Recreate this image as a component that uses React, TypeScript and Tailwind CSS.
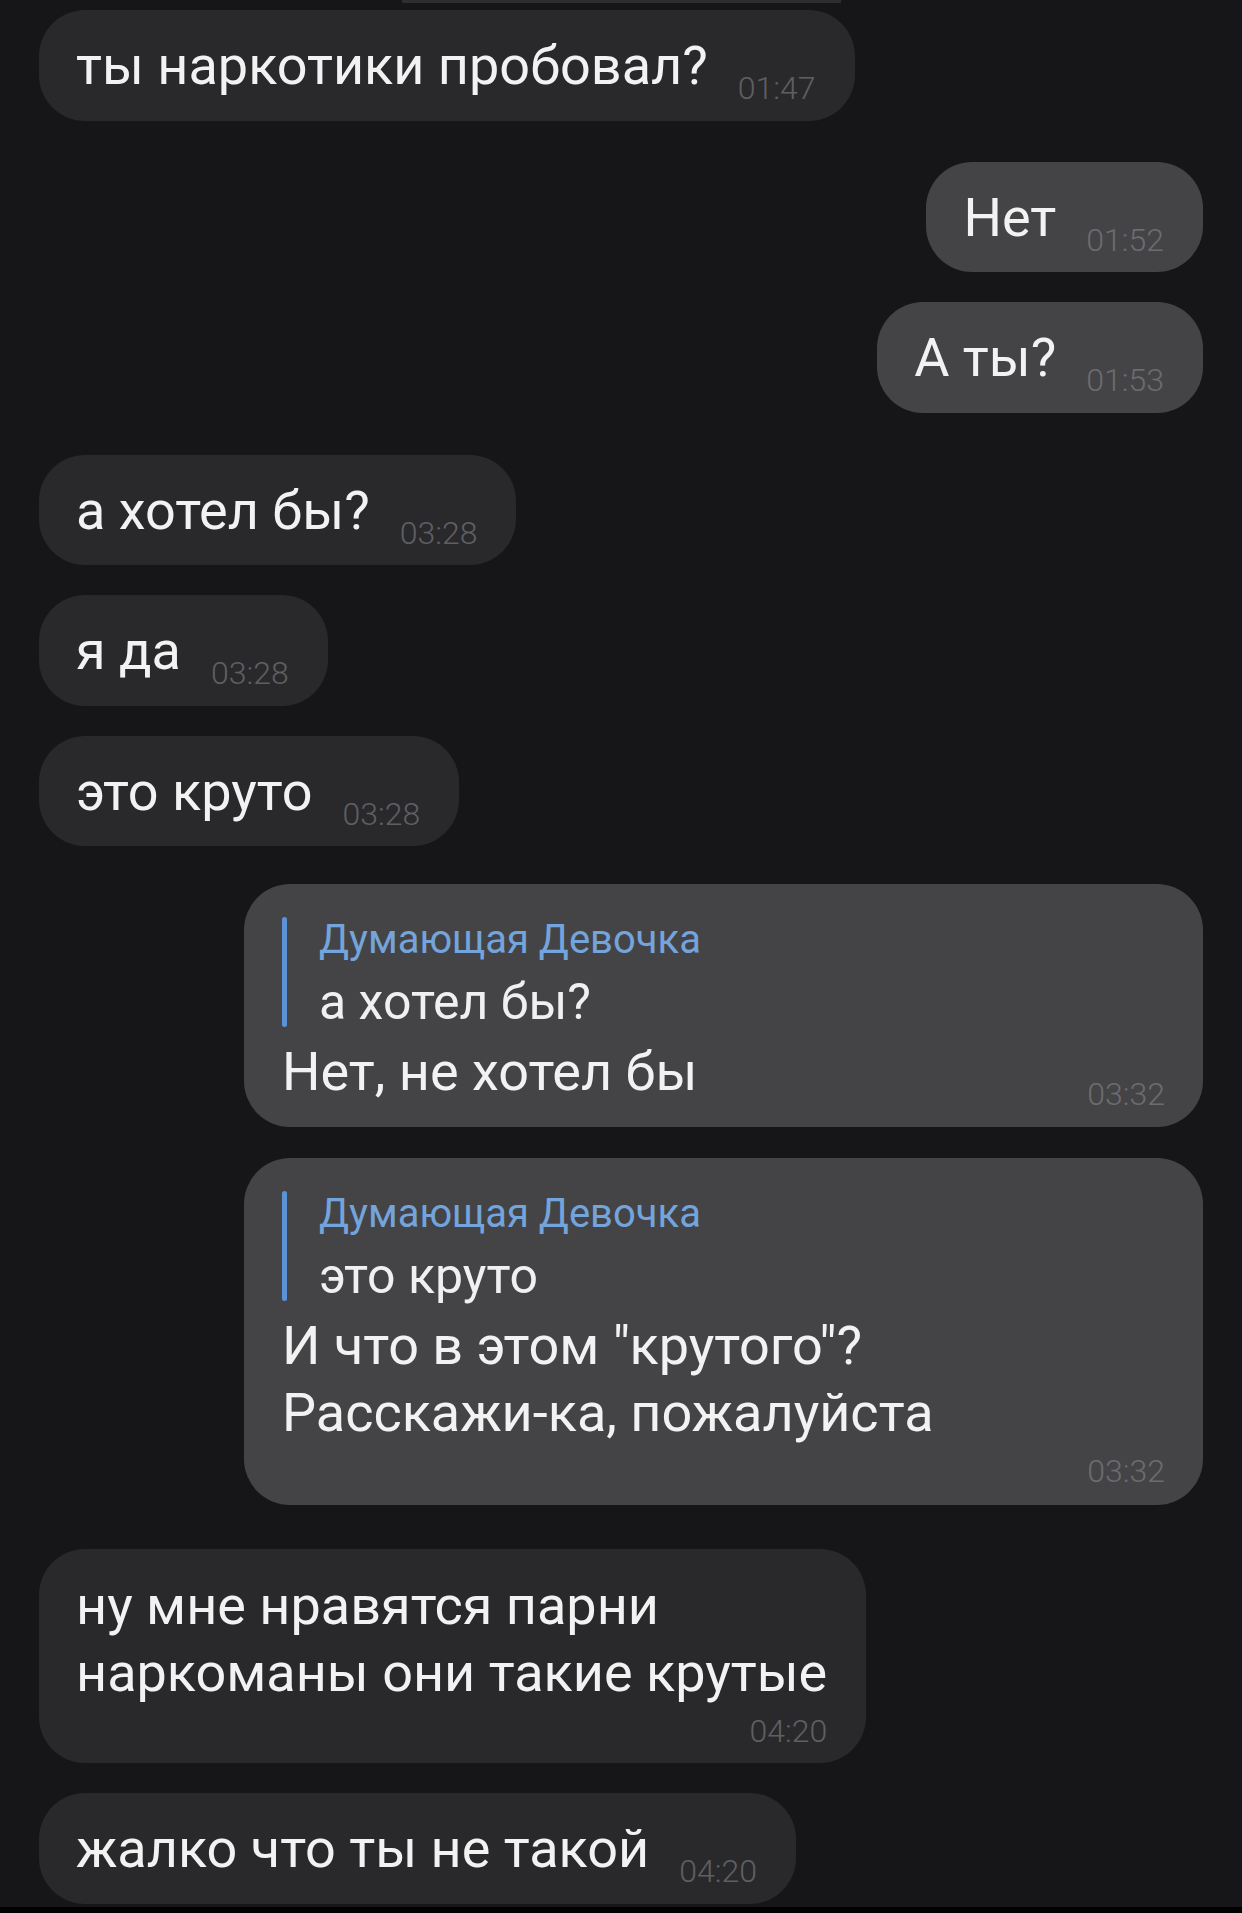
import type { ReactNode } from "react";

type Side = "in" | "out";

const font = { fontFamily: "Roboto, 'Noto Sans', sans-serif" };

function Time({ value, side }: { value: string; side: Side }) {
  return (
    <span
      className={
        "shrink-0 text-[32px] font-light leading-[40px] " +
        (side === "in" ? "text-[#5f5f62]" : "text-[#6c6c6f]")
      }
    >
      {value}
    </span>
  );
}

function Bubble({ side, text, time }: { side: Side; text: string; time: string }) {
  return (
    <div className={"flex " + (side === "in" ? "justify-start" : "justify-end")}>
      <div
        className={
          "flex items-end gap-[30px] rounded-[46px] pb-[21.5px] pl-[37px] pr-[39px] pt-[22px] " +
          (side === "in" ? "bg-[#29292c]" : "bg-[#444447]")
        }
      >
        <span className="text-[54px] leading-[67px] text-[#f2f2f2]">{text}</span>
        <span className="-mb-[9px]">
          <Time value={time} side={side} />
        </span>
      </div>
    </div>
  );
}

function MultiBubble({ lines, time }: { lines: string[]; time: string }) {
  return (
    <div className="flex justify-start">
      <div className="flex flex-col rounded-[46px] bg-[#29292c] pb-[12px] pl-[37px] pr-[39px] pt-[23px]">
        {lines.map((l) => (
          <span key={l} className="text-[54px] leading-[67px] text-[#f2f2f2]">
            {l}
          </span>
        ))}
        <div className="mt-[5px] flex justify-end">
          <Time value={time} side="in" />
        </div>
      </div>
    </div>
  );
}

function Reply({ quote, children }: { quote: string; children: ReactNode }) {
  return (
    <div className="flex justify-end">
      <div className="w-[959px] rounded-[46px] bg-[#444447] pb-[22px] pl-[38px] pr-[38px] pt-[26px]">
        <div className="flex">
          <div className="my-[7px] w-[5px] shrink-0 rounded-full bg-[#5b93d6]" />
          <div className="ml-[32px] flex flex-col">
            <span className="text-[40px] leading-[60px] text-[#74a4dc]">Думающая Девочка</span>
            <span className="text-[50px] leading-[64px] text-[#f0f0f0]">{quote}</span>
          </div>
        </div>
        <div className="mt-[4px]">{children}</div>
      </div>
    </div>
  );
}

export default function App() {
  return (
    <div className="flex min-h-[1913px] w-[1242px] flex-col bg-[#161618]" style={font}>
      <div className="ml-[402px] h-[3px] w-[439px] bg-[#2e2e31]" />
      <div className="flex flex-1 flex-col px-[39px] pt-[7px]">
        <Bubble side="in" text="ты наркотики пробовал?" time="01:47" />
        <div className="mt-[41px] flex flex-col gap-[30px]">
          <Bubble side="out" text="Нет" time="01:52" />
          <Bubble side="out" text="А ты?" time="01:53" />
        </div>
        <div className="mt-[42px] flex flex-col gap-[30px]">
          <Bubble side="in" text="а хотел бы?" time="03:28" />
          <Bubble side="in" text="я да" time="03:28" />
          <Bubble side="in" text="это круто" time="03:28" />
        </div>
        <div className="mt-[38px] flex flex-col gap-[31px]">
          <Reply quote="а хотел бы?">
            <div className="flex items-end justify-between">
              <span className="text-[54px] leading-[67px] text-[#f2f2f2]">Нет, не хотел бы</span>
              <span className="-mb-[9px]">
                <Time value="03:32" side="out" />
              </span>
            </div>
          </Reply>
          <Reply quote="это круто">
            <div className="flex flex-col">
              <span className="text-[54px] leading-[67px] text-[#f2f2f2]">И что в этом "крутого"?</span>
              <span className="text-[54px] leading-[67px] text-[#f2f2f2]">Расскажи-ка, пожалуйста</span>
              <div className="-mb-[8px] mt-[5px] flex justify-end">
                <Time value="03:32" side="out" />
              </div>
            </div>
          </Reply>
        </div>
        <div className="mt-[44px] flex flex-col gap-[30px]">
          <MultiBubble lines={["ну мне нравятся парни", "наркоманы они такие крутые"]} time="04:20" />
          <Bubble side="in" text="жалко что ты не такой" time="04:20" />
        </div>
      </div>
      <div className="h-[6px] bg-black" />
    </div>
  );
}
